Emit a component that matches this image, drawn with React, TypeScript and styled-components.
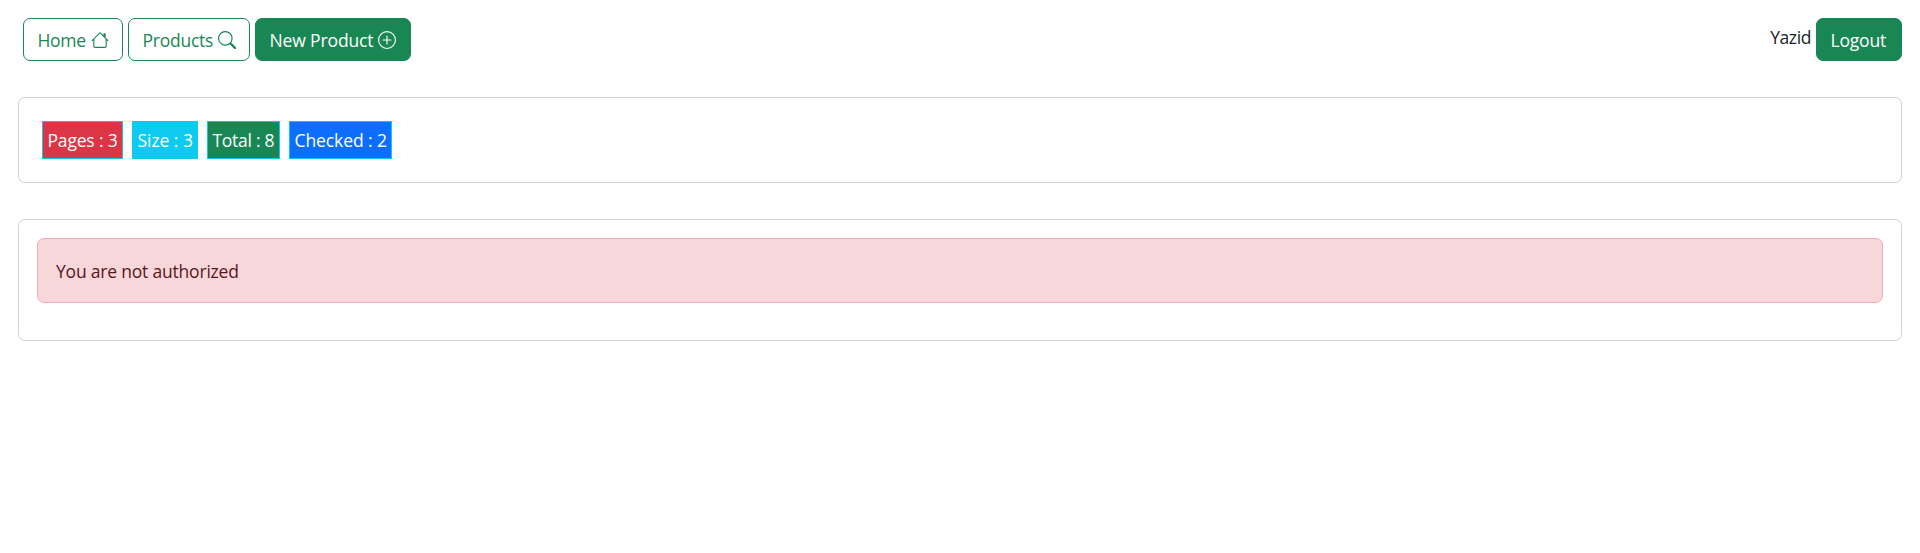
import React from 'react';
import styled, { createGlobalStyle, css } from 'styled-components';
import { BsHouse, BsPlusCircle, BsSearch } from 'react-icons/bs';

const GlobalStyle = createGlobalStyle`
  *, *::before, *::after { box-sizing: border-box; }
  body {
    margin: 0;
    background: #fff;
    color: #212529;
    font: 400 17.5px/27px "Segoe UI", "Open Sans", "Noto Sans", sans-serif;
  }
`;

const Page = styled.div`
  display: flex;
  flex-direction: column;
  padding: 18px;
`;

const Navbar = styled.nav`
  display: flex;
  justify-content: space-between;
  height: 43px;
  margin-bottom: 36px;
  padding-left: 5px;
`;

const NavGroup = styled.div`
  display: flex;
  gap: 5px;
`;

const Label = styled.span<{ $spacing?: number }>`
  letter-spacing: ${(p) => p.$spacing ?? -0.2}px;
  white-space: pre;
`;

const Button = styled.button<{ $width: number; $outline?: boolean }>`
  display: flex;
  align-items: center;
  width: ${(p) => p.$width}px;
  height: 43px;
  padding: 1px ${(p) => (p.$outline ? 13 : 14)}px 0 13.5px;
  border: 1px solid #198754;
  border-radius: 7px;
  font: inherit;
  white-space: nowrap;
  ${(p) =>
    p.$outline
      ? css`
          background: transparent;
          color: #198754;
        `
      : css`
          background: #198754;
          color: #fff;
        `}

  svg {
    width: 18px;
    height: 18px;
    flex: none;
    margin: 0 0 1px auto;
  }
`;

const UserName = styled.span`
  padding-top: 6px;
  letter-spacing: -0.4px;
`;

const Card = styled.section<{ $height: number }>`
  height: ${(p) => p.$height}px;
  margin-bottom: 36px;
  padding: 18px;
  border: 1px solid #d0d0d0;
  border-radius: 7px;
`;

const Stats = styled.div`
  display: flex;
  gap: 9px;
  padding: 5px;
`;

const Stat = styled.div<{ $color: string; $width: number }>`
  width: ${(p) => p.$width}px;
  height: 38px;
  padding: 5px 0 0 4.5px;
  border: 1px solid #0dcaf0;
  background: ${(p) => p.$color};
  color: #fff;
  white-space: nowrap;
`;

const Alert = styled.div`
  height: 65px;
  padding: 19px 18px;
  border: 1px solid #f1aeb5;
  border-radius: 7px;
  background: #f8d7da;
  color: #58151c;
`;

const stats = [
  { text: 'Pages : 3', color: '#dc3545', width: 81, spacing: -0.18 },
  { text: 'Size : 3', color: '#0dcaf0', width: 66, spacing: -0.05 },
  { text: 'Total : 8', color: '#198754', width: 73, spacing: -0.28 },
  { text: 'Checked : 2', color: '#0d6efd', width: 103, spacing: -0.1 },
];

export default function App() {
  return (
    <>
      <GlobalStyle />
      <Page>
        <Navbar>
          <NavGroup>
            <Button $outline $width={100}>
              <Label $spacing={-0.3}>Home</Label>
              <BsHouse />
            </Button>
            <Button $outline $width={122}>
              <Label $spacing={-0.25}>Products</Label>
              <BsSearch />
            </Button>
            <Button $width={156}>
              <Label $spacing={-0.13}>New Product</Label>
              <BsPlusCircle />
            </Button>
          </NavGroup>
          <NavGroup>
            <UserName>Yazid</UserName>
            <Button $width={86}>
              <Label>Logout</Label>
            </Button>
          </NavGroup>
        </Navbar>
        <Card $height={86}>
          <Stats>
            {stats.map((s) => (
              <Stat key={s.text} $color={s.color} $width={s.width}>
                <Label $spacing={s.spacing}>{s.text}</Label>
              </Stat>
            ))}
          </Stats>
        </Card>
        <Card $height={122}>
          <Alert role="alert">
            <Label>You are not authorized</Label>
          </Alert>
        </Card>
      </Page>
    </>
  );
}
